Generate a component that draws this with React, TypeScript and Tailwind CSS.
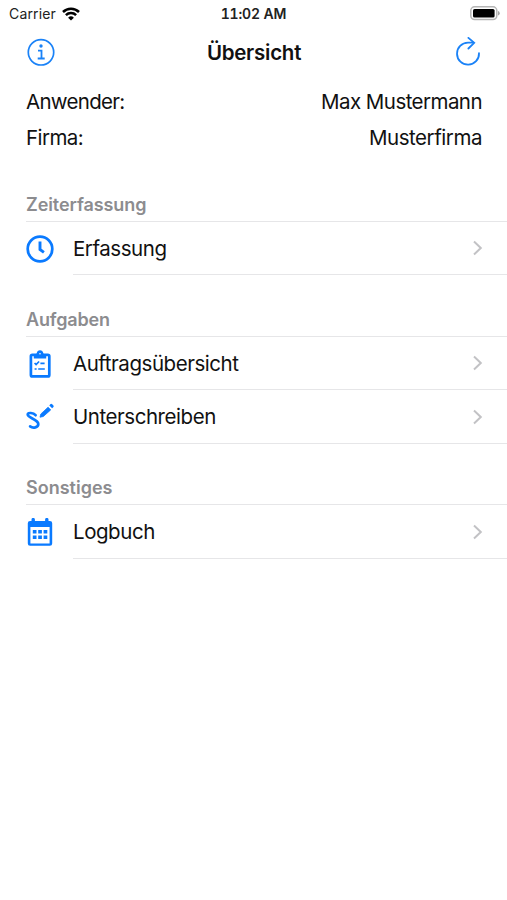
import React from 'react';

interface Entry {
  label: string;
  icon: React.ReactNode;
}

interface Section {
  title: string;
  titleClass: string;
  entries: Entry[];
}

const ClockIcon = () => (
  <svg width="28" height="28" viewBox="0 0 28 28" fill="none" stroke="#0a7aff">
    <circle cx="14" cy="14" r="12.3" strokeWidth="2.7" />
    <path d="M14 6.5v8l3.9 2.9" strokeWidth="2.9" />
  </svg>
);

const ClipboardIcon = () => (
  <svg width="28" height="28" viewBox="0 0 28 28" fill="none" stroke="#0a7aff">
    <rect x="4.9" y="4.8" width="18.4" height="21.6" rx="1.5" strokeWidth="2.7" />
    <path d="M7.8 8.6V4.6h2.6a3.6 3.6 0 0 1 7.2 0h2.6v4z" fill="#0a7aff" stroke="none" />
    <circle cx="14" cy="3.1" r="2.9" fill="#0a7aff" stroke="none" />
    <circle cx="14" cy="3.7" r="0.8" fill="#fff" stroke="none" />
    <path d="M8.6 13l1.5 1.5 3-3M14.4 13.4h4.2M12.2 19h6.6M8.6 19h2" strokeWidth="1.7" />
  </svg>
);

const SignIcon = () => (
  <svg width="28" height="28" viewBox="0 0 28 28" fill="none" stroke="#0a7aff">
    <path
      d="M9.6 12.2C7.4 9.8 1.7 9 1.7 11.6c0 3.4 10.6 4.6 10.6 9.4 0 3.6-5.2 4.6-8.2 2.4"
      strokeWidth="2.7"
      strokeLinecap="round"
    />
    <path d="M14 14.2l.8-3.2 7.3-6.8 2.6 2.7-7.4 6.6z" fill="#0a7aff" stroke="#0a7aff" strokeWidth="0.8" strokeLinejoin="round" />
    <path d="M23.3 2.4l1-1.1a1.3 1.3 0 0 1 1.9 0l1 1a1.3 1.3 0 0 1 0 1.9l-1.1 1.1z" fill="#0a7aff" stroke="none" />
  </svg>
);

const CalendarIcon = () => (
  <svg width="28" height="28" viewBox="0 0 28 28" fill="#0a7aff">
    <path
      fillRule="evenodd"
      d="M5.5 1.6a1.7 1.7 0 0 1 3.4 0V3h10.2V1.6a1.7 1.7 0 0 1 3.4 0V3h1.4a2.3 2.3 0 0 1 2.3 2.3v20.2a2.3 2.3 0 0 1-2.3 2.3H4.1a2.3 2.3 0 0 1-2.3-2.3V5.3A2.3 2.3 0 0 1 4.1 3h1.4zM4.4 9v16.4h19.2V9z"
    />
    <path d="M6.8 12h3.7v3.5H6.8zM12.2 12h3.7v3.5h-3.7zM17.6 12h3.7v3.5h-3.7zM6.8 17.6h3.7v3.5H6.8zM12.2 17.6h3.7v3.5h-3.7zM17.6 17.6h3.7v3.5h-3.7z" />
  </svg>
);

const Chevron = () => (
  <svg width="10" height="16" viewBox="0 0 10 16" fill="none">
    <path d="M1 1.6L7.8 8 1 14.4" stroke="#c2c2c5" strokeWidth="2" />
  </svg>
);

const sections: Section[] = [
  {
    title: 'Zeiterfassung',
    titleClass: 'tracking-[-0.08px]',
    entries: [{ label: 'Erfassung', icon: <ClockIcon /> }],
  },
  {
    title: 'Aufgaben',
    titleClass: 'tracking-[-0.15px]',
    entries: [
      { label: 'Auftragsübersicht', icon: <ClipboardIcon /> },
      { label: 'Unterschreiben', icon: <SignIcon /> },
    ],
  },
  {
    title: 'Sonstiges',
    titleClass: 'tracking-[0px]',
    entries: [{ label: 'Logbuch', icon: <CalendarIcon /> }],
  },
];

const StatusBar = () => (
  <div className="grid h-[27px] grid-cols-3 items-center pl-[9px] pr-[7px] text-[14px] text-[#222]">
    <div className="flex items-center gap-[6px]">
      <span className="tracking-[0.15px]">Carrier</span>
      <svg width="18" height="14" viewBox="0 0 18 14" fill="none" stroke="#000" strokeWidth="2.5">
        <path d="M1 5a11.4 11.4 0 0 1 16 0" />
        <path d="M3.9 8.1a7.2 7.2 0 0 1 10.2 0" />
        <path d="M9 13.6L6.1 10.7a4.1 4.1 0 0 1 5.8 0z" fill="#000" stroke="none" />
      </svg>
    </div>
    <span className="pr-[2px] text-center font-semibold tracking-[-0.15px] whitespace-nowrap tabular-nums">11:02 AM</span>
    <svg className="justify-self-end" width="30" height="15" viewBox="0 0 30 15">
      <rect x="0.8" y="0.8" width="26" height="12.8" rx="3.8" fill="#fff" stroke="#b5b5b5" strokeWidth="1.5" />
      <rect x="3" y="3" width="21.6" height="8.5" rx="1.6" fill="#000" />
      <path d="M28 5a2.4 2.4 0 0 1 0 4.6z" fill="#a5a5a5" />
    </svg>
  </div>
);

const App: React.FC = () => {
  return (
    <div className="min-h-[900px] w-full bg-white font-['Inter',sans-serif] text-[#111]">
      <StatusBar />

      <div className="flex h-[50px] items-center justify-between pl-[27px] pr-[26px]">
        <svg width="28" height="28" viewBox="0 0 28 28" fill="none" stroke="#1a82f7">
          <circle cx="14" cy="14.3" r="12.7" strokeWidth="1.7" />
          <circle cx="14" cy="8" r="1.7" fill="#1a82f7" stroke="none" />
          <path d="M11 12.6h3.5v7.7M10.7 20.5h7" strokeWidth="1.8" />
        </svg>
        <h1 className="pt-[3px] pr-[2px] text-[20.5px] font-semibold tracking-[-0.25px]">Übersicht</h1>
        <svg width="26" height="30" viewBox="0 0 26 30" fill="none" stroke="#1a82f7" strokeWidth="1.8" strokeLinecap="round">
          <path d="M24 16.2A11 11 0 1 1 13 5.7h5.2" />
          <path d="M13.4 .9l5.8 5-5.8 5.6" />
        </svg>
      </div>

      <div className="flex flex-col pt-[7px] pl-[26px] pr-[25px] text-[20.5px] leading-[36px]">
        <div className="flex h-[36px] justify-between">
          <span className="tracking-[-0.7px]">Anwender:</span>
          <span className="tracking-[-0.55px]">Max Mustermann</span>
        </div>
        <div className="flex h-[36px] justify-between">
          <span className="tracking-[-0.55px]">Firma:</span>
          <span className="tracking-[-0.45px]">Musterfirma</span>
        </div>
      </div>

      <div className="pt-[4.4px]">
        {sections.map((section) => (
          <section key={section.title} className="pl-[26px]">
            <div className="flex h-[61.3px] items-end border-b border-[#e6e6e8] pb-[4px]">
              <h2 className={`text-[18px] leading-6 font-semibold text-[#8c8c8f] ${section.titleClass}`}>{section.title}</h2>
            </div>
            {section.entries.map((entry) => (
              <div key={entry.label} className="flex h-[53.7px] items-center">
                {entry.icon}
                <div className="ml-[19px] flex h-full flex-1 items-center justify-between border-b border-[#e6e6e8] pr-[24px]">
                  <span className="pt-[2px] text-[20.5px] tracking-[-0.45px]">{entry.label}</span>
                  <Chevron />
                </div>
              </div>
            ))}
          </section>
        ))}
      </div>
    </div>
  );
};

export default App;
